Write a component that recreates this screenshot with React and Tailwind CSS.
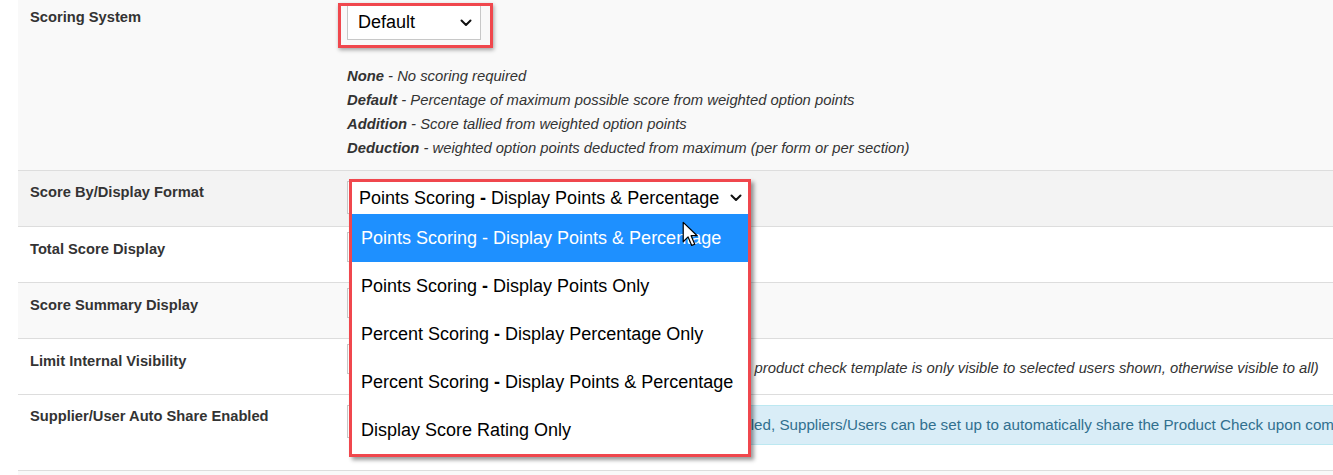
import React from 'react';

const descriptions = [
  { key: 'None', text: 'No scoring required' },
  { key: 'Default', text: 'Percentage of maximum possible score from weighted option points' },
  { key: 'Addition', text: 'Score tallied from weighted option points' },
  { key: 'Deduction', text: 'weighted option points deducted from maximum (per form or per section)' },
];

const options = [
  'Points Scoring - Display Points & Percentage',
  'Points Scoring - Display Points Only',
  'Percent Scoring - Display Percentage Only',
  'Percent Scoring - Display Points & Percentage',
  'Display Score Rating Only',
];

const Chevron = () => (
  <svg width="12" height="8" viewBox="0 0 12 8" className="shrink-0">
    <path d="M1.5 1.5 L6 6 L10.5 1.5" fill="none" stroke="#111" strokeWidth="2" strokeLinecap="round" strokeLinejoin="round" />
  </svg>
);

// rendered option text, dash in bold like the browser's dropdown
const OptionText = ({ text }) => {
  if (!text.includes(' - ')) return <span>{text}</span>;
  const [a, b] = text.split(' - ');
  return (
    <span>
      {a} <b className="font-bold">-</b> {b}
    </span>
  );
};

const Label = ({ children, pt = 'pt-[13px]' }) => (
  <div className={`w-[317px] shrink-0 px-3 ${pt} text-[14.7px] font-bold leading-[18px] text-[#333]`}>{children}</div>
);

export default function App() {
  return (
    <div className="relative w-[1333px] h-[475px] overflow-hidden bg-white font-['Liberation_Sans',Arial,sans-serif] text-[#333]">
      <div className="ml-[18px] flex flex-col">
        {/* Scoring System */}
        <div className="flex h-[171px] bg-[#f9f9f9] border-b border-[#ddd]">
          <Label pt="pt-[8px]">Scoring System</Label>
          <div className="flex-1 px-3 pt-[5px]">
            <div className="relative w-[134px]">
              <div className="flex items-center justify-between h-[35px] pl-[10px] pr-[8px] bg-white border border-[#c8c8c8] text-[18px] text-black">
                <span>Default</span>
                <Chevron />
              </div>
              <div className="absolute left-[-9px] top-[-2px] w-[155px] h-[45px] border-[3px] border-[#f0474d] shadow-[1px_2px_4px_rgba(0,0,0,0.35)]" />
            </div>
            <div className="mt-[24px] text-[14.8px] leading-[24px] italic">
              {descriptions.map((d) => (
                <div key={d.key}>
                  <b className="font-bold">{d.key}</b> - {d.text}
                </div>
              ))}
            </div>
          </div>
        </div>

        {/* Score By/Display Format */}
        <div className="flex h-[56px] bg-[#f3f3f3] border-b border-[#ddd]">
          <Label pt="pt-[12px]">Score By/Display Format</Label>
          <div className="relative flex-1 px-3 pt-[10px]">
            <div className="w-[403px] h-[33px] bg-white border border-[#c8c8c8]" />
            <div className="absolute left-[14px] top-[8px] z-10 w-[402px] border-[3px] border-[#f0474d] bg-white shadow-[3px_3px_4px_rgba(0,0,0,0.4)]">
              <div className="flex items-center justify-between h-[32px] pl-[7px] pr-[6px] text-[18px] text-black">
                <OptionText text={options[0]} />
                <Chevron />
              </div>
              {options.map((o, i) => (
                <div
                  key={o}
                  className={`flex items-center h-[48px] pl-[9px] text-[18px] ${i === 0 ? 'bg-[#1e90ff] text-white' : 'text-black'}`}
                >
                  {i === 0 ? <span>{o}</span> : <OptionText text={o} />}
                </div>
              ))}
            </div>
          </div>
        </div>

        {/* Total Score Display */}
        <div className="flex h-[56px] bg-white border-b border-[#ddd]">
          <Label>Total Score Display</Label>
          <div className="flex-1 px-3 pt-[5px]">
            <div className="w-[300px] h-[30px] bg-white border border-[#c8c8c8]" />
          </div>
        </div>

        {/* Score Summary Display */}
        <div className="flex h-[56px] bg-[#f9f9f9] border-b border-[#ddd]">
          <Label>Score Summary Display</Label>
          <div className="flex-1 px-3 pt-[5px]">
            <div className="w-[300px] h-[30px] bg-white border border-[#c8c8c8]" />
          </div>
        </div>

        {/* Limit Internal Visibility */}
        <div className="flex h-[56px] bg-white border-b border-[#ddd]">
          <Label>Limit Internal Visibility</Label>
          <div className="flex flex-1 gap-3 px-3 pt-[5px]">
            <div className="w-[94px] h-[30px] shrink-0 bg-white border border-[#c8c8c8]" />
            <div className="pt-[15px] text-[14.8px] leading-[18px] italic whitespace-nowrap">
              (When set to Yes and users are selected, this product check template is only visible to selected users shown, otherwise visible to all)
            </div>
          </div>
        </div>

        {/* Supplier/User Auto Share Enabled */}
        <div className="flex h-[76px] bg-white border-b border-[#ddd]">
          <Label pt="pt-[12px]">Supplier/User Auto Share Enabled</Label>
          <div className="flex flex-1 gap-3 px-3 pt-[10px]">
            <div className="w-[298px] h-[33px] shrink-0 bg-white border border-[#c8c8c8]" />
            <div className="flex items-center h-[40px] px-[15px] bg-[#d9edf7] border border-[#bce8f1] text-[15.2px] text-[#31708f] whitespace-nowrap">
              When enabled, Suppliers/Users can be set up to automatically share the Product Check upon completion
            </div>
          </div>
        </div>

        <div className="h-[10px] bg-[#f9f9f9]" />
      </div>

      {/* mouse pointer */}
      <svg className="absolute left-[682px] top-[221px] z-20" width="17" height="27" viewBox="0 0 14 22">
        <path d="M1 1 L1 17 L5 13 L8 20 L10.5 19 L7.5 12 L12.5 12 Z" fill="#fff" stroke="#000" strokeWidth="1" strokeLinejoin="round" />
      </svg>
    </div>
  );
}
